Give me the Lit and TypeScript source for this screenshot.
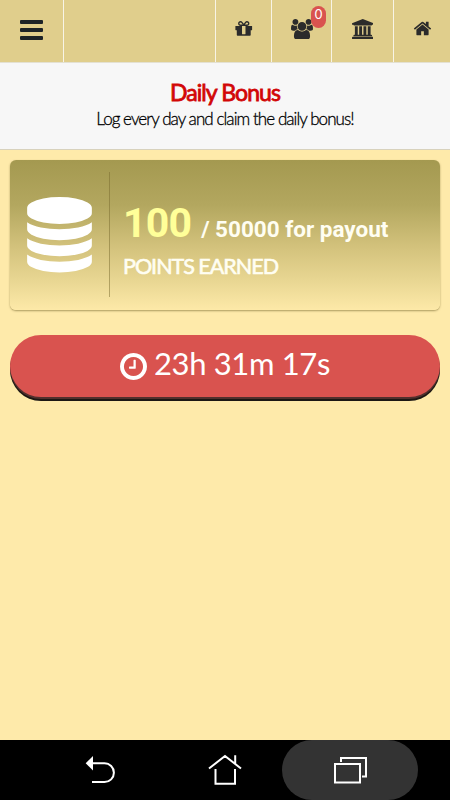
import { LitElement, html, css, svg } from "lit";
import { customElement, property } from "lit/decorators.js";

const ICONS: Record<string, { box: string; d: string }> = {
  database: {
    box: "128 0 1536 1792",
    d: "M896 768q237 0 443-43t325-127v170q0 69-103 128t-280 93.5-385 34.5-385-34.5-280-93.5-103-128v-170q119 84 325 127t443 43zm0 768q237 0 443-43t325-127v170q0 69-103 128t-280 93.5-385 34.5-385-34.5-280-93.5-103-128v-170q119 84 325 127t443 43zm0-384q237 0 443-43t325-127v170q0 69-103 128t-280 93.5-385 34.5-385-34.5-280-93.5-103-128v-170q119 84 325 127t443 43zm0-1152q208 0 385 34.5t280 93.5 103 128v128q0 69-103 128t-280 93.5-385 34.5-385-34.5-280-93.5-103-128v-128q0-69 103-128t280-93.5 385-34.5z",
  },
  home: {
    box: "0 0 1792 1792",
    d: "M1472 992v480q0 26-19 45t-45 19h-384v-384h-256v384h-384q-26 0-45-19t-19-45v-480q0-1 .5-3t.5-3l575-474 575 474q1 2 1 6zm223-69l-62 74q-8 9-21 11h-3q-13 0-21-7l-692-577-692 577q-12 8-24 7-13-2-21-11l-62-74q-8-10-7-23.5t11-21.5l719-599q32-26 76-26t76 26l244 204v-195q0-14 9-23t23-9h192q14 0 23 9t9 23v408l219 182q10 8 11 21.5t-7 23.5z",
  },
  bank: {
    box: "0 0 1920 1792",
    d: "M960 0l960 384v128h-128q0 26-20.5 45t-48.5 19h-1526q-28 0-48.5-19t-20.5-45h-128v-128zm-704 640h256v768h128v-768h256v768h128v-768h256v768h128v-768h256v768h59q28 0 48.5 19t20.5 45v64h-1664v-64q0-26 20.5-45t48.5-19h59v-768zm1595 960q28 0 48.5 19t20.5 45v128h-1920v-128q0-26 20.5-45t48.5-19h1782z",
  },
  gift: {
    box: "0 0 1792 1792",
    d: "M1056 1356v-716h-320v716q0 25 18 38.5t46 13.5h192q28 0 46-13.5t18-38.5zm-456-844h195l-126-161q-26-31-69-31-40 0-68 28t-28 68 28 68 68 28zm688-96q0-40-28-68t-68-28q-43 0-69 31l-125 161h194q40 0 68-28t28-68zm376 256v320q0 14-9 23t-23 9h-96v416q0 40-28 68t-68 28h-1088q-40 0-68-28t-28-68v-416h-96q-14 0-23-9t-9-23v-320q0-14 9-23t23-9h440q-93 0-158.5-65.5t-65.5-158.5 65.5-158.5 158.5-65.5q107 0 168 77l128 165 128-165q61-77 168-77 93 0 158.5 65.5t65.5 158.5-65.5 158.5-158.5 65.5h440q14 0 23 9t9 23z",
  },
  users: {
    box: "0 0 1920 1792",
    d: "M593 896q-162 5-265 128h-134q-82 0-138-40.5t-56-118.5q0-353 124-353 6 0 43.5 21t97.5 42.5 119 21.5q67 0 133-23-5 37-5 66 0 139 81 256zm1071 637q0 120-73 189.5t-194 69.5h-874q-121 0-194-69.5t-73-189.5q0-53 3.5-103.5t14-109 26.5-108.5 43-97.5 62-81 85.5-53.5 111.5-20q10 0 43 21.5t73 48 107 48 135 21.5 135-21.5 107-48 73-48 43-21.5q61 0 111.5 20t85.5 53.5 62 81 43 97.5 26.5 108.5 14 109 3.5 103.5zm-1024-1277q0 106-75 181t-181 75-181-75-75-181 75-181 181-75 181 75 75 181zm704 384q0 159-112.5 271.5t-271.5 112.5-271.5-112.5-112.5-271.5 112.5-271.5 271.5-112.5 271.5 112.5 112.5 271.5zm576 225q0 78-56 118.5t-138 40.5h-134q-103-123-265-128 81-117 81-256 0-29-5-66 66 23 133 23 59 0 119-21.5t97.5-42.5 43.5-21q124 0 124 353zm-128-609q0 106-75 181t-181 75-181-75-75-181 75-181 181-75 181 75 75 181z",
  },
  clock: {
    box: "128 128 1536 1536",
    d: "M1024 544v448q0 14-9 23t-23 9h-320q-14 0-23-9t-9-23v-64q0-14 9-23t23-9h224v-352q0-14 9-23t23-9h64q14 0 23 9t9 23zm416 352q0-148-73-273t-198-198-273-73-273 73-198 198-73 273 73 273 198 198 273 73 273-73 198-198 73-273zm224 0q0 209-103 385.5t-279.5 279.5-385.5 103-385.5-103-279.5-279.5-103-385.5 103-385.5 279.5-279.5 385.5-103 385.5 103 279.5 279.5 103 385.5z",
  },
};

@customElement("glyph-icon")
class GlyphIcon extends LitElement {
  @property() name = "home";

  static styles = css`
    :host { display: block; flex: none; }
    .glyph { display: block; width: 100%; height: 100%; fill: currentColor; }
  `;

  render() {
    const icon = ICONS[this.name];
    return html`<svg class="glyph" viewBox=${icon.box}>${svg`<path d=${icon.d}></path>`}</svg>`;
  }
}

@customElement("app-root")
class AppRoot extends LitElement {
  static styles = css`
    :host {
      display: flex;
      flex-direction: column;
      width: 450px;
      height: 800px;
      overflow: hidden;
      background: #feeaaa;
      font-family: Lato, sans-serif;
    }
    .topbar {
      display: grid;
      grid-template-columns: 64px 152px 56px 60px 62px 56px;
      height: 63px;
      box-sizing: border-box;
      border-bottom: 1px solid #e4e1d2;
      background: #e0ce8c;
      color: #2b2b2b;
      flex: none;
    }
    .cell {
      display: flex;
      align-items: center;
      justify-content: center;
      box-sizing: border-box;
      border-right: 1px solid #f8f4e6;
      padding-bottom: 4px;
    }
    .cell:last-child { border-right: 0; padding-bottom: 5px; }
    .menu { flex-direction: column; gap: 4px; padding: 0 0 2px; }
    .bar { width: 23.5px; height: 4px; border-radius: 1px; background: #1c2326; }
    .gift { width: 19.5px; height: 19.5px; }
    .users { width: 22px; height: 20.5px; }
    .bank { width: 21.5px; height: 20px; }
    .home { width: 19px; height: 19px; }
    .people { position: relative; }
    .badge {
      position: absolute;
      left: 39px;
      top: 6px;
      width: 15px;
      height: 22px;
      border-radius: 7.5px;
      background: #d9534f;
      color: #fff;
      font-size: 13px;
      line-height: 17px;
      text-align: center;
    }
    .banner {
      flex: none;
      height: 87px;
      box-sizing: border-box;
      padding-top: 15px;
      background: #f7f7f7;
      border-bottom: 1px solid #d8d2bd;
      text-align: center;
      white-space: nowrap;
    }
    .title {
      font-size: 23px;
      line-height: 28px;
      letter-spacing: -0.9px;
      color: #d20606;
      -webkit-text-stroke: 0.8px #d20606;
    }
    .subtitle {
      font-size: 17px;
      line-height: 26px;
      font-weight: 300;
      letter-spacing: -0.93px;
      color: #000;
      -webkit-text-stroke: 0.3px #000;
    }
    .card {
      display: flex;
      flex: none;
      margin: 10px 10px 0;
      height: 150px;
      border-radius: 6px;
      background: linear-gradient(#a49950, #b3a75f 30%, #d3c27c 58%, #e8d692 80%, #fde9a8);
      box-shadow: 0 1px 2px rgba(90, 75, 20, 0.5);
      color: #fffef2;
      white-space: nowrap;
    }
    .coins { display: flex; justify-content: center; width: 99px; padding-top: 37px; }
    .database { width: 65px; height: 75.5px; color: #fff; }
    .rule { width: 1px; height: 125px; margin-top: 12px; background: rgba(120, 105, 45, 0.5); }
    .stats { padding: 38px 0 0 13px; }
    .amount {
      display: flex;
      align-items: baseline;
      gap: 10px;
      height: 53px;
      line-height: 50px;
      font-family: Roboto, sans-serif;
      font-weight: 700;
    }
    .points { font-size: 41px; letter-spacing: -0.8px; color: #ffff99; }
    .goal { font-size: 22.5px; }
    .label { font-size: 21.5px; line-height: 30px; letter-spacing: -1px; -webkit-text-stroke: 0.6px #fffef2; }
    .timer {
      display: flex;
      flex: none;
      align-items: flex-start;
      justify-content: center;
      gap: 7px;
      box-sizing: border-box;
      height: 62px;
      margin: 25px 10px 0;
      border-radius: 31px;
      background: #d9534f;
      box-shadow: 0 2px 0 #51302d, 0 4px 0 #1c1713;
      color: #fff;
      white-space: nowrap;
    }
    .clock { width: 27px; height: 27px; margin-top: 18px; }
    .time { font-size: 31px; line-height: 38px; margin-top: 9px; letter-spacing: -0.35px; }
    .space { flex: 1; }
    .navbar {
      display: grid;
      flex: none;
      grid-template-columns: 200px 50px 32px 136px;
      height: 60px;
      background: #000;
    }
    .nav { display: flex; align-items: center; justify-content: center; }
    .recent {
      grid-column: 4;
      height: 60px;
      border-radius: 30px;
      background: #333;
    }
    .line { display: block; fill: none; stroke: #fff; stroke-width: 2; }
    .solid { fill: #fff; stroke: none; }
  `;

  render() {
    return html`
      <header class="topbar">
        <div class="cell menu"><i class="bar"></i><i class="bar"></i><i class="bar"></i></div>
        <div class="cell"></div>
        <div class="cell"><glyph-icon class="gift" name="gift"></glyph-icon></div>
        <div class="cell people">
          <glyph-icon class="users" name="users"></glyph-icon>
          <span class="badge">0</span>
        </div>
        <div class="cell"><glyph-icon class="bank" name="bank"></glyph-icon></div>
        <div class="cell"><glyph-icon class="home" name="home"></glyph-icon></div>
      </header>
      <section class="banner">
        <div class="title">Daily Bonus</div>
        <div class="subtitle">Log every day and claim the daily bonus!</div>
      </section>
      <section class="card">
        <div class="coins"><glyph-icon class="database" name="database"></glyph-icon></div>
        <div class="rule"></div>
        <div class="stats">
          <div class="amount"><span class="points">100</span><span class="goal">/ 50000 for payout</span></div>
          <div class="label">POINTS EARNED</div>
        </div>
      </section>
      <section class="timer">
        <glyph-icon class="clock" name="clock"></glyph-icon>
        <span class="time">23h 31m 17s</span>
      </section>
      <div class="space"></div>
      <footer class="navbar">
        <div class="nav">
          <svg class="line" width="30" height="30" viewBox="0 0 30 30">
            <path d="M8 8.3H19.5a9.3 9.3 0 0 1 0 18.8H7"></path>
            <path class="solid" d="M.7 8.3L8 1v14.6z"></path>
          </svg>
        </div>
        <div class="nav">
          <svg class="line" width="34" height="32" viewBox="0 0 34 32">
            <path d="M1 14.5L17 2l16 12.500M27.200 1.200v9M7.500 15v14.700h19.500V15"></path>
          </svg>
        </div>
        <div class="nav recent">
          <svg class="line" width="34" height="28" viewBox="0 0 34 28">
            <path d="M2 8h25v18.500h-25zM8 6V2h25v18.500h-4"></path>
          </svg>
        </div>
      </footer>
    `;
  }
}
